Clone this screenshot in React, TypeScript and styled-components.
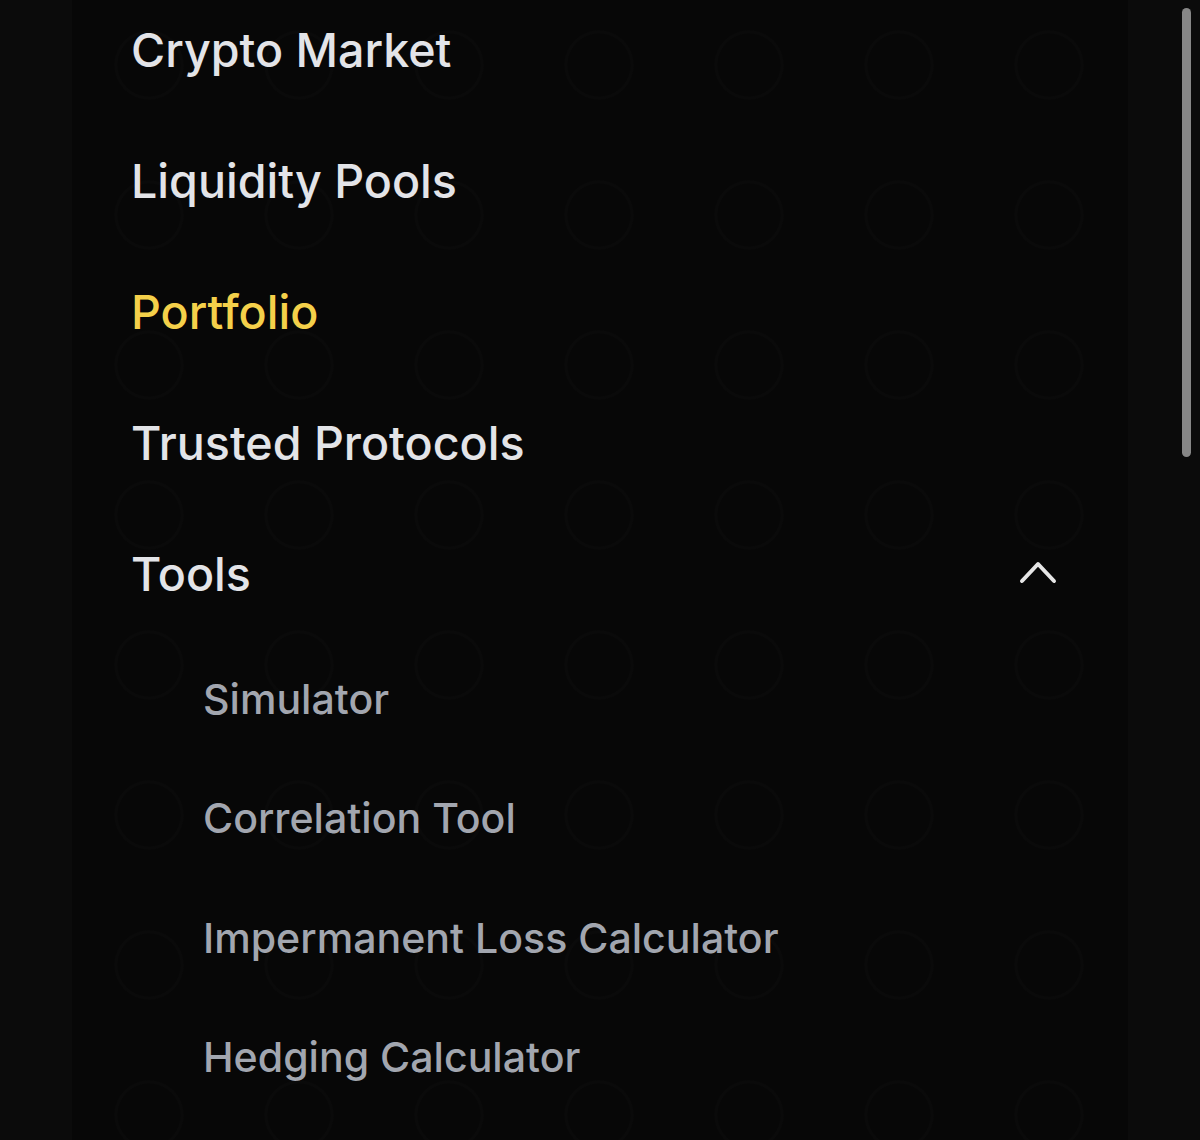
import styled, { createGlobalStyle } from "styled-components"

const GlobalStyle = createGlobalStyle`
  html, body {
    margin: 0;
    padding: 0;
    background: #0b0b0b;
  }
  body {
    font-family: Inter, "Noto Sans", "Liberation Sans", sans-serif;
    -webkit-font-smoothing: antialiased;
  }
`

const Screen = styled.div`
  position: relative;
  width: 1200px;
  height: 1140px;
  overflow: hidden;
  display: flex;
  justify-content: center;
  background: #0b0b0b;
`

const Panel = styled.nav`
  width: 1056px;
  height: 100%;
  background-color: #070707;
  background-image: radial-gradient(
    circle at 75px 75px,
    transparent 31px,
    #0a0a0a 32px,
    #0a0a0a 34px,
    transparent 35px
  );
  background-size: 150px 150px;
  background-position: 452px 140px;
  padding: 0 69px 0 59px;
  box-sizing: border-box;
`

const List = styled.ul`
  list-style: none;
  margin: -16px 0 0;
  padding: 0;
`

const MainItem = styled.li<{ $active?: boolean }>`
  height: 131px;
  display: flex;
  align-items: center;
  justify-content: space-between;
  font-size: 46.6px;
  font-weight: 500;
  letter-spacing: 0;
  color: ${(p) => (p.$active ? "#f4d04a" : "#e3e4e8")};
`

const SubList = styled.ul`
  list-style: none;
  margin: 0;
  padding: 0 0 0 72px;
`

const SubItem = styled.li`
  height: 119.5px;
  display: flex;
  align-items: center;
  font-size: 41.1px;
  font-weight: 500;
  color: #a2a6af;
`

const Chevron = styled.svg`
  width: 42px;
  height: 24px;
  margin-top: -4px;
`

const ScrollThumb = styled.div`
  position: absolute;
  top: 8px;
  right: 9px;
  width: 9px;
  height: 449px;
  border-radius: 5px;
  background: #878787;
`

const mainItems = ["Crypto Market", "Liquidity Pools", "Portfolio", "Trusted Protocols"]
const tools = ["Simulator", "Correlation Tool", "Impermanent Loss Calculator", "Hedging Calculator"]

function App() {
  return (
    <>
      <GlobalStyle />
      <Screen>
        <Panel>
          <List>
            {mainItems.map((label) => (
              <MainItem key={label} $active={label === "Portfolio"}>
                {label}
              </MainItem>
            ))}
            <MainItem>
              Tools
              <Chevron viewBox="0 0 42 24" fill="none">
                <polyline
                  points="5,21 21,4 37,21"
                  stroke="#e6e6e6"
                  strokeWidth="4"
                  strokeLinecap="round"
                  strokeLinejoin="round"
                />
              </Chevron>
            </MainItem>
          </List>
          <SubList>
            {tools.map((label) => (
              <SubItem key={label}>{label}</SubItem>
            ))}
          </SubList>
        </Panel>
        <ScrollThumb />
      </Screen>
    </>
  )
}

export default App
